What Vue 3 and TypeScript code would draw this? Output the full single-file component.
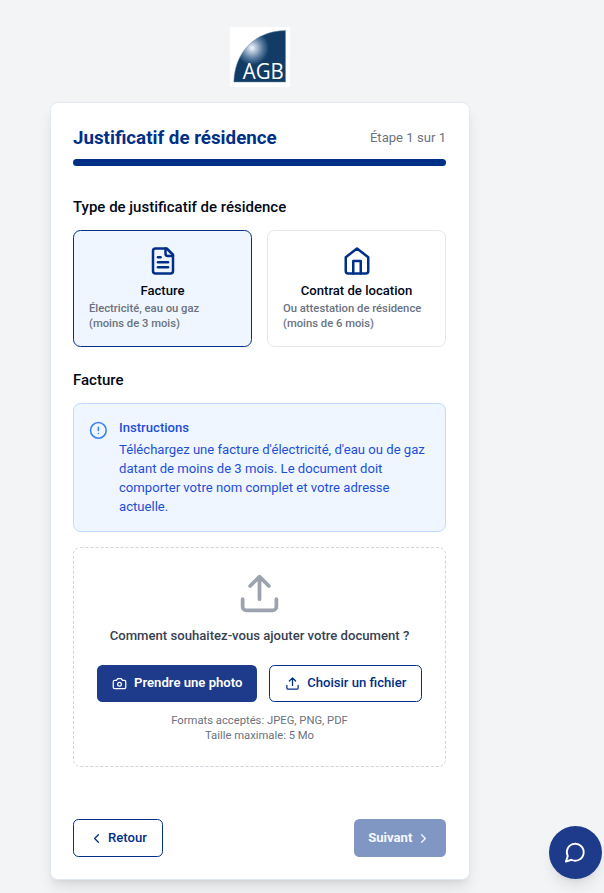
<script setup lang="ts">
import { ref } from 'vue'

interface DocumentOption {
  id: string
  title: string
  detail: string
  limit: string
  paths: string[]
}

const options: DocumentOption[] = [
  {
    id: 'facture',
    title: 'Facture',
    detail: 'Électricité, eau ou gaz',
    limit: '(moins de 3 mois)',
    paths: [
      'M15 2H6a2 2 0 0 0-2 2v16a2 2 0 0 0 2 2h12a2 2 0 0 0 2-2V7Z',
      'M14 2v4a2 2 0 0 0 2 2h4',
      'M10 9H8',
      'M16 13H8',
      'M16 17H8',
    ],
  },
  {
    id: 'contrat',
    title: 'Contrat de location',
    detail: 'Ou attestation de résidence',
    limit: '(moins de 6 mois)',
    paths: ['m3 9 9-7 9 7v11a2 2 0 0 1-2 2H5a2 2 0 0 1-2-2z', 'M9 22V12h6v10'],
  },
]

const selected = ref('facture')
</script>

<template>
  <div class="page">
    <main class="column">
      <svg class="logo" viewBox="0 0 60 60" role="img" aria-label="AGB">
        <defs>
          <radialGradient id="shine" gradientUnits="userSpaceOnUse" cx="22" cy="21" r="17">
            <stop offset="0" stop-color="#f4f8fb" />
            <stop offset="0.2" stop-color="#c3d0df" />
            <stop offset="0.6" stop-color="#5c7fa3" />
            <stop offset="1" stop-color="#123c66" />
          </radialGradient>
        </defs>
        <rect width="60" height="60" fill="#fff" />
        <path d="M55.5 3.5V55H3.8C4.5 26 24 4 55.500 3.500Z" fill="url(#shine)" stroke="#6d8aa8" stroke-width=".5" />
        <text x="12.8" y="52.3" textLength="41" lengthAdjust="spacingAndGlyphs" class="logo-text">AGB</text>
      </svg>

      <section class="card">
        <header class="card-head">
          <h1>Justificatif de résidence</h1>
          <span class="step">Étape 1 sur 1</span>
        </header>
        <div class="progress"></div>

        <h2>Type de justificatif de résidence</h2>
        <div class="options">
          <div
            v-for="option in options"
            :key="option.id"
            class="option"
            :class="{ active: option.id === selected }"
            @click="selected = option.id"
          >
            <svg class="icon option-icon" viewBox="0 0 24 24">
              <path v-for="d in option.paths" :key="d" :d="d" />
            </svg>
            <span class="option-title">{{ option.title }}</span>
            <span class="option-detail">{{ option.detail }}<br />{{ option.limit }}</span>
          </div>
        </div>

        <h2 class="second">Facture</h2>
        <div class="notice">
          <svg class="icon notice-icon" viewBox="0 0 24 24">
            <circle cx="12" cy="12" r="10" />
            <path d="M12 8v4M12 16h.01" />
          </svg>
          <div>
            <p class="notice-title">Instructions</p>
            <p class="notice-text">
              Téléchargez une facture d'électricité, d'eau ou de gaz datant de moins de 3 mois. Le document doit
              comporter votre nom complet et votre adresse actuelle.
            </p>
          </div>
        </div>

        <div class="dropzone">
          <svg class="icon drop-icon" viewBox="0 0 24 24">
            <path d="M21 15v4a2 2 0 0 1-2 2H5a2 2 0 0 1-2-2v-4" />
            <path d="m17 8-5-5-5 5M12 3v12" />
          </svg>
          <p class="question">Comment souhaitez-vous ajouter votre document ?</p>
          <div class="actions">
            <button class="button solid">
              <svg class="icon small" viewBox="0 0 24 24">
                <path d="M14.5 4h-5L7 7H4a2 2 0 0 0-2 2v9a2 2 0 0 0 2 2h16a2 2 0 0 0 2-2V9a2 2 0 0 0-2-2h-3l-2.500-3z" />
                <circle cx="12" cy="13" r="3" />
              </svg>
              Prendre une photo
            </button>
            <button class="button outline">
              <svg class="icon small" viewBox="0 0 24 24">
                <path d="M21 15v4a2 2 0 0 1-2 2H5a2 2 0 0 1-2-2v-4" />
                <path d="m17 8-5-5-5 5M12 3v12" />
              </svg>
              Choisir un fichier
            </button>
          </div>
          <p class="formats">Formats acceptés: JPEG, PNG, PDF<br />Taille maximale: 5 Mo</p>
        </div>

        <footer class="navigation">
          <button class="button outline back">
            <svg class="icon small" viewBox="0 0 24 24"><path d="m15 18-6-6 6-6" /></svg>
            Retour
          </button>
          <button class="button next" disabled>
            Suivant
            <svg class="icon small" viewBox="0 0 24 24"><path d="m9 18 6-6-6-6" /></svg>
          </button>
        </footer>
      </section>
    </main>

    <button class="chat" aria-label="Chat">
      <svg class="icon" viewBox="0 0 24 24"><path d="M7.900 20A9 9 0 1 0 4 16.100L2 22Z" /></svg>
    </button>
  </div>
</template>

<style>
body {
  margin: 0;
  background: #f2f4f6;
}
</style>

<style scoped>
.page,
.page * {
  box-sizing: border-box;
}
.page {
  height: 893px;
  overflow: hidden;
  background: #f2f4f6;
  font-family: Roboto, sans-serif;
  font-size: 13.125px;
  line-height: 18.75px;
  color: #020817;
}
.column {
  width: 520px;
  padding-top: 27px;
  display: flex;
  flex-direction: column;
  align-items: center;
}
.logo {
  display: block;
  width: 60px;
  height: 60px;
  margin-bottom: 15px;
}
.logo-text {
  font-family: 'Open Sans', sans-serif;
  font-size: 22px;
  fill: #fff;
}
.card {
  width: 420px;
  height: 778px;
  padding: 21.5px 23px 21.5px 22px;
  border: 1px solid #e2e8f0;
  border-radius: 7.5px;
  background: #fff;
  box-shadow: 0 10px 15px -3px rgba(0, 0, 0, 0.1), 0 4px 6px -4px rgba(0, 0, 0, 0.1);
}
h1,
h2,
p {
  margin: 0;
}
.card-head {
  display: flex;
  justify-content: space-between;
  align-items: center;
  margin-bottom: 8.25px;
}
h1 {
  font-size: 18.75px;
  line-height: 26.25px;
  font-weight: 700;
  color: #002f87;
}
.step {
  padding-top: 1.5px;
  color: #6b7280;
}
.progress {
  height: 7px;
  border-radius: 8px;
  background: #002f87;
}
h2 {
  margin: 29.75px 0 11.25px;
  font-size: 15px;
  line-height: 22.5px;
  font-weight: 500;
}
h2.second {
  margin-top: 22.5px;
}
.icon {
  display: block;
  flex: none;
  fill: none;
  stroke: currentColor;
  stroke-width: 2;
  stroke-linecap: round;
  stroke-linejoin: round;
}
.options {
  display: grid;
  grid-template-columns: 1fr 1fr;
  gap: 15px;
}
.option {
  display: flex;
  flex-direction: column;
  align-items: center;
  height: 117px;
  padding: 15px 15px 0;
  border: 1px solid #e5e7eb;
  border-radius: 7.5px;
}
.option.active {
  border-color: #002f87;
  background: #eff6ff;
}
.option-icon {
  width: 30px;
  height: 30px;
  margin-bottom: 6px;
  color: #002f87;
}
.option-title {
  font-weight: 500;
}
.option-detail {
  align-self: flex-start;
  margin-top: 0.75px;
  font-size: 11.25px;
  line-height: 15px;
  font-weight: 500;
  color: #6b7280;
}
.notice {
  display: flex;
  gap: 11.25px;
  height: 129px;
  padding: 15px;
  border: 1px solid #bfdbfe;
  border-radius: 7.5px;
  background: #eff6ff;
  color: #1d4ed8;
}
.notice-icon {
  width: 18.75px;
  height: 18.75px;
  margin-top: 2px;
  color: #3b82f6;
}
.notice-title {
  margin-bottom: 3.75px;
  font-weight: 500;
}
.dropzone {
  display: flex;
  flex-direction: column;
  align-items: center;
  height: 220px;
  margin-top: 15px;
  padding: 23.5px 22px 20px;
  border: 1px dashed #d1d5db;
  border-radius: 7.5px;
}
.drop-icon {
  width: 45px;
  height: 45px;
  color: #9ca3af;
}
.question {
  margin: 11px 0 19px;
  font-weight: 500;
  color: #374151;
}
.actions {
  display: flex;
  gap: 12px;
}
.button {
  display: flex;
  align-items: center;
  justify-content: center;
  gap: 7.5px;
  height: 37px;
  padding: 0 14px;
  border: 1px solid transparent;
  border-radius: 5.5px;
  font: 500 13.125px/18.75px Roboto, sans-serif;
  white-space: nowrap;
}
.small {
  width: 15px;
  height: 15px;
}
.solid {
  width: 160px;
  background: #1e3a8a;
  color: #fff;
  font-weight: 600;
}
.outline {
  width: 153px;
  border-color: #002f87;
  background: #fff;
  color: #002f87;
}
.formats {
  margin-top: 10.5px;
  font-size: 11.25px;
  line-height: 15px;
  text-align: center;
  color: #6b7280;
}
.navigation {
  display: flex;
  justify-content: space-between;
  margin-top: 52px;
}
.navigation .button {
  height: 38px;
  padding-top: 1px;
}
.button.back {
  width: 90px;
  gap: 4px;
}
.button.next {
  width: 92px;
  gap: 3.5px;
  padding-right: 15px;
  background: #8097c3;
  color: #f5f8ff;
  font-weight: 700;
}
.chat {
  position: fixed;
  left: 549px;
  top: 826px;
  display: flex;
  align-items: center;
  justify-content: center;
  width: 53px;
  height: 53px;
  padding: 0;
  border: 0;
  border-radius: 50%;
  background: #1e3a8a;
  color: #fff;
  box-shadow: 0 10px 15px -3px rgba(0, 0, 0, 0.1), 0 4px 6px -4px rgba(0, 0, 0, 0.1);
}
.chat .icon {
  width: 22.5px;
  height: 22.5px;
}
</style>
